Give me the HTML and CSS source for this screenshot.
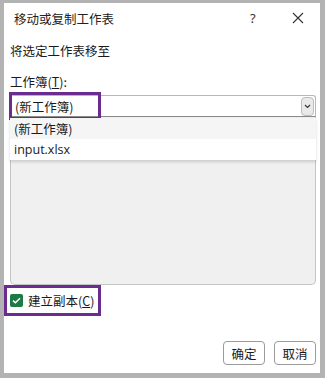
FILE: index.html
```html
<!DOCTYPE html>
<html>
<head>
<meta charset="utf-8">
<link rel="stylesheet" href="styles.css">
</head>
<body>
<div class="dialog">
  <div class="titlebar">
    <span class="title">移动或复制工作表</span>
    <span class="help">?</span>
    <span class="close">
      <svg width="12" height="12" viewBox="0 0 12 12"><path d="M1 1L11 11M11 1L1 11" stroke="#333" stroke-width="1.1" fill="none"/></svg>
    </span>
  </div>
  <div class="content">
    <div class="label1">将选定工作表移至</div>
    <div class="label2">工作簿(<u>T</u>):</div>
    <div class="combo-area">
      <div class="select">
        <span class="select-text">(新工作簿)</span>
        <span class="drop-btn">
          <svg width="7" height="5" viewBox="0 0 7 5"><path d="M1 1L3.5 3.5L6 1" stroke="#333" stroke-width="1.1" fill="none"/></svg>
        </span>
      </div>
      <div class="hl hl-select"></div>
      <div class="listbox"></div>
      <div class="dropdown">
        <div class="item active">(新工作簿)</div>
        <div class="item latin">input.xlsx</div>
      </div>
    </div>
    <div class="check-row">
      <span class="checkbox">
        <svg width="9" height="7" viewBox="0 0 9 7"><path d="M1 3.6L3.4 5.8L8 1.2" stroke="#fff" stroke-width="1.5" fill="none"/></svg>
      </span>
      <span class="check-label">建立副本(<u>C</u>)</span>
      <div class="hl hl-check"></div>
    </div>
    <div class="buttons">
      <button class="btn">确定</button>
      <button class="btn">取消</button>
    </div>
  </div>
</div>
</body>
</html>
```
FILE: styles.css
```css
html, body {
  margin: 0;
  padding: 0;
  background: #b3b3b3;
}
body {
  width: 325px;
  height: 378px;
  overflow: hidden;
  font-family: "Noto Sans CJK SC", "Noto Sans", sans-serif;
  font-size: 12.5px;
  color: #1a1a1a;
}
.dialog {
  margin: 3px 5px 0 4px;
  width: 316px;
  height: 370px;
  background: #fff;
  display: flex;
  flex-direction: column;
}
.titlebar {
  height: 30px;
  display: flex;
  align-items: center;
  padding-left: 10px;
}
.title {
  flex: 1;
  font-size: 12.5px;
  color: #222;
  margin-top: 1px;
}
.help {
  width: 14px;
  font-family: "Noto Sans", sans-serif;
  font-size: 13px;
  color: #333;
  margin-right: 28px;
}
.close {
  width: 12px;
  height: 12px;
  display: flex;
  margin-right: 16px;
}
.content {
  padding: 0 4px 0 6px;
  display: flex;
  flex-direction: column;
}
.label1 {
  height: 18px;
  line-height: 18px;
  margin-top: 9px;
}
.label2 {
  height: 18px;
  line-height: 18px;
  margin-top: 13px;
}
.label2 u, .check-label u {
  text-decoration: underline;
  text-underline-offset: 1px;
}
.combo-area {
  position: relative;
  margin-top: 4px;
  display: flex;
  flex-direction: column;
}
.select {
  height: 22px;
  border: 1px solid #b8b8b8;
  border-bottom-color: #8a8a8a;
  border-radius: 3px 3px 0 0;
  display: flex;
  align-items: center;
  justify-content: space-between;
  box-sizing: border-box;
}
.select-text {
  padding-left: 4px;
}
.drop-btn {
  width: 13px;
  height: 19px;
  margin-right: 1px;
  border: 1px solid #bdbdbd;
  border-radius: 4px;
  background: #e9e9e9;
  box-sizing: border-box;
  display: flex;
  align-items: center;
  justify-content: center;
}
.listbox {
  height: 168px;
  background: #f0f0f0;
  border: 1px solid #c4c4c4;
  border-top: none;
  border-radius: 0 0 5px 5px;
  box-sizing: border-box;
}
.dropdown {
  position: absolute;
  left: 0;
  right: 0;
  top: 23px;
  background: #fff;
  box-shadow: 0 2px 3px rgba(0,0,0,0.15);
}
.item {
  height: 21px;
  line-height: 21px;
  padding-left: 4px;
}
.item.active {
  background: #f5f5f5;
}
.item.latin {
  font-family: "Open Sans", "Noto Sans", sans-serif;
  font-size: 12.5px;
}
.hl {
  position: absolute;
  border: 3px solid #6a2c8e;
  box-sizing: border-box;
  pointer-events: none;
}
.hl-select {
  left: -1px;
  top: -3px;
  width: 92px;
  height: 28px;
}
.check-row {
  position: relative;
  height: 31px;
  display: flex;
  align-items: center;
}
.checkbox {
  width: 13px;
  height: 13px;
  border-radius: 2px;
  background: #1d7a46;
  display: flex;
  align-items: center;
  justify-content: center;
  margin-right: 5px;
}
.check-label {
  font-size: 12.5px;
}
.hl-check {
  left: -6px;
  top: 0;
  width: 97px;
  height: 31px;
}
.buttons {
  margin-top: 25px;
  display: flex;
  justify-content: flex-end;
  gap: 9px;
}
.btn {
  width: 42px;
  height: 24px;
  padding: 0;
  border: 1px solid #9a9a9a;
  border-radius: 4px;
  background: #fff;
  font-family: "Noto Sans CJK SC", "Noto Sans", sans-serif;
  font-size: 12.5px;
  color: #1a1a1a;
}
```
